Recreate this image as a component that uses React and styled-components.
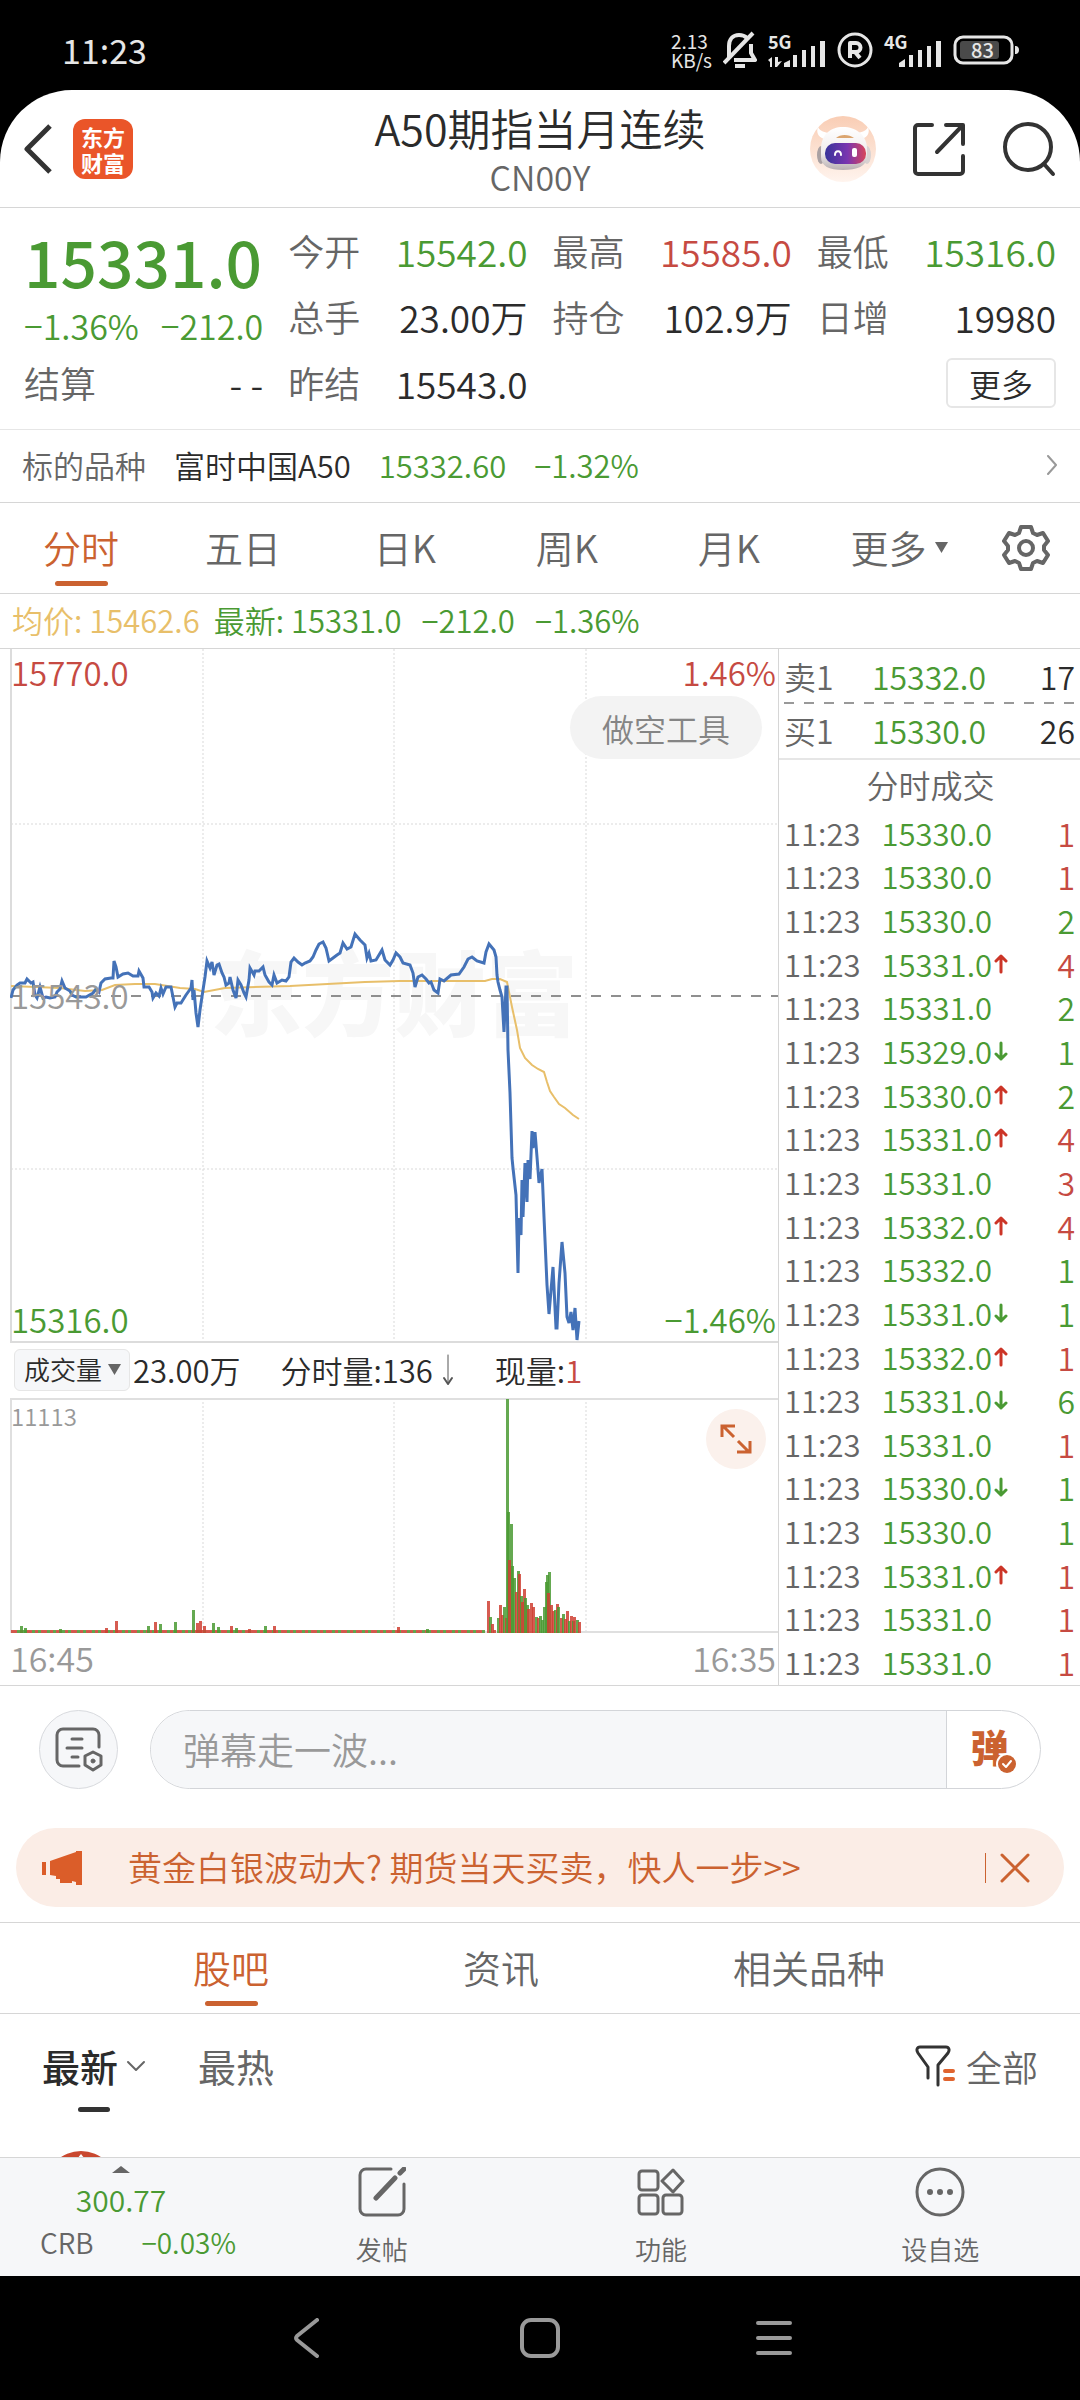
import React from "react";
import styled, { createGlobalStyle, css } from "styled-components";

const c = {
  green: "#4a9a33",
  red: "#c64a42",
  orange: "#cb6230",
  yellow: "#e8bf6a",
  blue: "#4472b8",
  ink: "#2b2b2b",
  sub: "#666666",
  mute: "#999999",
  line: "#d6d6d6",
  soft: "#e6e6e6",
  fill: "#f6f7f9",
};

const GlobalStyle = createGlobalStyle`
  * { box-sizing: border-box; }
  body {
    margin: 0;
    background: #000;
    color: ${c.ink};
    font-family: "Noto Sans CJK SC", "Noto Sans", sans-serif;
    font-weight: 350;
    font-size: 32px;
    line-height: 1.2;
  }
  button, input, select, table { font: inherit; color: inherit; }
  button { background: none; border: 0; padding: 0; margin: 0; cursor: pointer; }
  a { color: inherit; text-decoration: none; }
  svg { display: block; flex: none; }
  h1, h2, p, dl, dt, dd { margin: 0; font: inherit; }
`;

const tone = (p) => c[p.$tone] || c.ink;

const Text = styled.span`
  color: ${tone};
  font-size: ${(p) => p.$size || 31}px;
  white-space: nowrap;
`;

/* ---------- status bar ---------- */

const StatusBar = styled.div`
  display: flex;
  align-items: center;
  justify-content: space-between;
  height: 90px;
  padding: 10px 60px 0 62px;
  color: #e6e6e6;
`;

const Clock = styled.time`
  font-size: 34px;
  font-weight: 400;
`;

const StatusIcons = styled.div`
  display: flex;
  align-items: center;
  gap: 11px;
`;

const Speed = styled.div`
  font-size: 19px;
  font-weight: 400;
  line-height: 19px;
`;

const Signal = styled.div`
  display: flex;
  align-items: flex-end;
  height: 36px;
`;

const Generation = styled.span`
  align-self: flex-start;
  width: 0;
  overflow: visible;
  white-space: nowrap;
  font-size: 18px;
  font-weight: 700;
  line-height: 18px;
`;

const Battery = styled.div`
  display: grid;
  place-items: center;
  > * { grid-area: 1 / 1; }
`;

const Charge = styled.span`
  padding-right: 8px;
  font-size: 20px;
  font-weight: 500;
  line-height: 26px;
`;

/* ---------- header ---------- */

const Sheet = styled.main`
  overflow: hidden;
  background: #fff;
  border-radius: 72px 72px 0 0;
`;

const Header = styled.header`
  display: grid;
  grid-template-columns: 1fr auto 1fr;
  align-items: center;
  height: 118px;
  padding: 0 24px;
  border-bottom: 1px solid ${c.line};
`;

const HeaderSide = styled.div`
  display: flex;
  align-items: center;
  justify-content: ${(p) => (p.$end ? "flex-end" : "flex-start")};
  gap: ${(p) => (p.$end ? 37 : 21)}px;
`;

const Logo = styled.a`
  display: grid;
  place-content: center;
  width: 60px;
  height: 60px;
  border-radius: 12px;
  background: #ea5529;
  color: #fff;
  font-size: 22px;
  font-weight: 700;
  line-height: 26px;
`;

const TitleBlock = styled.div`
  display: flex;
  flex-direction: column;
  align-items: center;
  padding-top: 4px;
`;

const Title = styled.h1`
  font-size: 43px;
  line-height: 52px;
`;

const Code = styled.p`
  color: ${c.sub};
  font-size: 34px;
  line-height: 48px;
`;

/* ---------- quote ---------- */

const Quote = styled.section`
  display: grid;
  grid-template-columns: repeat(4, minmax(0, 1fr));
  column-gap: 25px;
  padding: 10px 24px 13px;
  border-bottom: 1px solid ${c.soft};
`;

const QuoteColumn = styled.dl`
  display: flex;
  flex-direction: column;
`;

const QuoteRow = styled.div`
  display: flex;
  align-items: center;
  justify-content: space-between;
  height: ${(p) => p.$height || 66}px;
  white-space: nowrap;
`;

const Term = styled.dt`
  color: ${c.sub};
  font-size: 36px;
`;

const Value = styled.dd`
  color: ${tone};
  font-size: ${(p) => p.$size || 37}px;
  font-weight: ${(p) => p.$weight || 350};
`;

const MoreButton = styled.button`
  width: 110px;
  height: 50px;
  margin-left: auto;
  border: 2px solid ${c.soft};
  border-radius: 6px;
  font-size: 32px;
  line-height: 42px;
`;

const Underlying = styled.a`
  display: flex;
  align-items: center;
  gap: 28px;
  height: 73px;
  padding: 0 22px 2px;
  border-bottom: 1px solid ${c.line};
  svg { margin-left: auto; }
`;

/* ---------- tabs ---------- */

const TabBar = styled.nav`
  display: flex;
  height: 91px;
  border-bottom: 1px solid ${c.line};
  ${(p) =>
    p.$spread
      ? css`
          > button { flex: 1 1 0; }
        `
      : css`
          gap: 194px;
          padding-left: 193px;
        `}
`;

const Tab = styled.button`
  display: flex;
  flex-direction: column;
  align-items: center;
  gap: 7px;
  padding-top: 17px;
  color: ${(p) => (p.$active ? c.orange : c.sub)};
  font-size: 38px;
  line-height: 54px;
  &::after {
    content: "";
    width: 53px;
    height: 5px;
    border-radius: 3px;
    background: ${(p) => (p.$active ? c.orange : "transparent")};
  }
`;

const TabLabel = styled.span`
  display: flex;
  align-items: center;
  gap: 8px;
  padding-left: ${(p) => (p.$inset ? 16 : 0)}px;
`;

const Settings = styled.button`
  &&& { flex: 0 0 108px; }
  display: grid;
  place-items: center;
`;

/* ---------- charts ---------- */

const Legend = styled.div`
  display: flex;
  align-items: center;
  gap: 20px;
  height: 55px;
  padding: 0 12px 2px;
  border-bottom: 1px solid ${c.line};
`;

const LegendPair = styled.span`
  display: flex;
  gap: 14px;
`;

const Market = styled.section`
  display: grid;
  grid-template-columns: 1fr 302px;
  border-bottom: 1px solid ${c.line};
`;

const Charts = styled.div`
  display: flex;
  flex-direction: column;
  padding-left: 10px;
`;

const Plot = styled.div`
  position: relative;
  height: ${(p) => p.$height}px;
  > svg { position: relative; width: 100%; height: 100%; }
`;

const PlotLabel = styled.span`
  position: absolute;
  ${(p) => (p.$right ? "right: 2px" : "left: 1px")};
  ${(p) => p.$edge || "top"}: ${(p) => p.$offset};
  color: ${tone};
  font-size: ${(p) => p.$size || 33}px;
  line-height: 40px;
`;

const Watermark = styled.span`
  position: absolute;
  inset: 0;
  display: grid;
  place-items: center;
  padding-bottom: 14px;
  color: #f7f7f7;
  font-size: 92px;
  font-weight: 900;
  line-height: 92px;
  white-space: nowrap;
`;

const ShortTool = styled.button`
  position: absolute;
  top: 47px;
  right: 16px;
  width: 192px;
  height: 63px;
  border-radius: 32px;
  background: #f3f3f3;
  color: #858585;
  font-size: 32px;
  line-height: 60px;
`;

const Expand = styled.button`
  position: absolute;
  top: 11px;
  right: 12px;
  display: grid;
  place-items: center;
  width: 60px;
  height: 60px;
  border-radius: 50%;
  background: #fbf1ec;
`;

const VolumeHead = styled.div`
  display: flex;
  align-items: center;
  height: 55px;
  padding: 0 0 2px 4px;
  gap: 40px;
`;

const VolumeGroup = styled.div`
  display: flex;
  align-items: center;
  gap: ${(p) => p.$gap || 0}px;
`;

const Picker = styled.div`
  display: grid;
  align-items: center;
  width: 116px;
  height: 42px;
  border: 1px solid ${c.soft};
  border-radius: 6px;
  background: ${c.fill};
  > * { grid-area: 1 / 1; }
  > svg { justify-self: end; margin-right: 8px; pointer-events: none; }
`;

const Select = styled.select`
  width: 100%;
  height: 40px;
  padding: 0 0 2px 9px;
  border: 0;
  appearance: none;
  background: transparent;
  font-size: 26px;
`;

const Axis = styled.div`
  display: flex;
  justify-content: space-between;
  align-items: center;
  height: 52px;
  padding: 0 2px 2px 0;
`;

/* ---------- order book and trades ---------- */

const Book = styled.aside`
  border-left: 1px solid ${c.line};
`;

const Quotes = styled.table`
  width: 100%;
  border-collapse: collapse;
  border-bottom: 2px solid ${c.soft};
`;

const QuotesLine = styled.tr`
  height: 55px;
  background: ${(p) =>
    p.$dashed
      ? `repeating-linear-gradient(90deg, ${c.mute} 0 10px, transparent 10px 20px) 5px 100% / 100% 2px no-repeat`
      : "none"};
`;

const Trades = styled.table`
  width: 100%;
  height: 873px;
  border-collapse: collapse;
  caption {
    height: 52px;
    padding-left: 2px;
    color: ${c.sub};
    line-height: 48px;
  }
`;

const Cell = styled.td`
  padding: 0 ${(p) => (p.$end ? 5 : 0)}px 2px ${(p) => (p.$start ? 5 : 0)}px;
  color: ${tone};
  font-size: ${(p) => p.$size || 32}px;
  line-height: 36px;
  text-align: ${(p) => (p.$start ? "left" : "right")};
  white-space: nowrap;
  width: ${(p) => p.$width}px;
`;

const Direction = styled.td`
  width: 20px;
  padding: 0 0 2px 2px;
`;

/* ---------- danmaku and banner ---------- */

const Danmaku = styled.form`
  display: flex;
  gap: 32px;
  padding: 24px 39px 39px;
`;

const RoundButton = styled.button`
  display: grid;
  place-items: center;
  width: 79px;
  height: 79px;
  border: 1px solid #d8dade;
  border-radius: 50%;
  background: ${c.fill};
`;

const Field = styled.div`
  display: flex;
  flex: 1;
  height: 79px;
  overflow: hidden;
  border: 1px solid #d3d5d9;
  border-radius: 40px;
`;

const Input = styled.input`
  flex: 1;
  min-width: 0;
  padding: 0 0 0 32px;
  border: 0;
  outline: 0;
  background: ${c.fill};
  font-size: 37px;
  &::placeholder { color: ${c.mute}; opacity: 1; }
`;

const DanmakuToggle = styled.button`
  display: grid;
  place-items: center;
  width: 94px;
  border-left: 1px solid #d3d5d9;
  color: ${c.orange};
  > * { grid-area: 1 / 1; }
  svg { margin: 28px 0 0 26px; }
`;

const DanmakuGlyph = styled.span`
  padding-bottom: 8px;
  padding-right: 8px;
  font-size: 38px;
  font-weight: 900;
  line-height: 40px;
`;

const Banner = styled.div`
  display: flex;
  align-items: center;
  height: 79px;
  margin: 0 16px 15px;
  padding: 0 34px 0 26px;
  border-radius: 40px;
  background: #fbede6;
  color: ${c.orange};
`;

const BannerLink = styled.a`
  flex: 1;
  padding-left: 44px;
  font-size: 34px;
`;

const Close = styled.button`
  padding-left: 14px;
  border-left: 1px solid ${c.orange};
`;

/* ---------- forum ---------- */

const Forum = styled.section`
  border-top: 1px solid ${c.line};
`;

const SortBar = styled.div`
  display: flex;
  align-items: flex-start;
  gap: 52px;
  height: 111px;
  padding: 25px 42px 0;
`;

const Sort = styled.button`
  display: flex;
  flex-direction: column;
  align-items: center;
  gap: 14px;
  color: ${(p) => (p.$active ? c.ink : c.sub)};
  font-size: 38px;
  font-weight: ${(p) => (p.$active ? 500 : 400)};
  line-height: 54px;
  &::after {
    content: "";
    width: 32px;
    height: 5px;
    border-radius: 3px;
    background: ${(p) => (p.$active ? "#333" : "transparent")};
  }
`;

const Filter = styled.button`
  display: flex;
  align-items: center;
  gap: 11px;
  margin-left: auto;
  color: ${c.sub};
  font-size: 36px;
  line-height: 54px;
`;

const Feed = styled.div`
  height: 32px;
  padding: 26px 0 0 45px;
  overflow: hidden;
`;

const Avatar = styled.div`
  display: flex;
  justify-content: center;
  width: 72px;
  height: 72px;
  padding-top: 3px;
  border-radius: 50%;
  background: #c9482f;
`;

/* ---------- bottom bars ---------- */

const ActionBar = styled.nav`
  display: grid;
  grid-template-columns: 242px repeat(3, 1fr);
  height: 119px;
  border-top: 1px solid ${c.line};
  background: ${c.fill};
`;

const Ticker = styled.a`
  display: flex;
  flex-direction: column;
  align-items: center;
  padding-top: 8px;
`;

const TickerRow = styled.span`
  display: flex;
  align-items: center;
  justify-content: ${(p) => (p.$spread ? "space-between" : "center")};
  width: 100%;
  height: ${(p) => (p.$spread ? 38 : 51)}px;
  padding: ${(p) => (p.$spread ? "0 6px 0 40px" : "0")};
`;

const Action = styled.button`
  display: flex;
  flex-direction: column;
  align-items: center;
  gap: 13px;
  padding-top: 9px;
  color: ${c.sub};
  font-size: 26px;
  line-height: 38px;
`;

const SystemNav = styled.nav`
  display: flex;
  justify-content: center;
  height: 124px;
  background: #000;
  button {
    display: grid;
    place-items: center;
    width: 234px;
  }
`;

/* ---------- drawings ---------- */

const Svg = ({ w, h, children, stroke = "none", sw = 3, ...rest }) => (
  <svg
    width={w}
    height={h}
    viewBox={`0 0 ${w} ${h}`}
    fill="none"
    stroke={stroke}
    strokeWidth={sw}
    strokeLinecap="round"
    strokeLinejoin="round"
    aria-hidden="true"
    {...rest}
  >
    {children}
  </svg>
);

const MuteIcon = () => (
  <Svg w={34} h={38} stroke="#e6e6e6" sw={4} strokeLinecap="butt">
    <path d="M6 27V15C6 8 10 4 16 4c4 0 6 1 8 3" />
    <path d="M28 13v9l4 7H11" />
    <path d="M1 32 30 2" />
    <path d="M12 35h10" strokeWidth="4" />
  </Svg>
);

const Bars = ({ data }) => (
  <Svg w={58} h={30}>
    <g fill="#e6e6e6">
      {data && <path d="M0 22l4-3v10H2v-5zM7 19h3v5l4-1-5 6H7zM16 25l6-3v7h-6z" />}
      {!data && <path d="M15 25l6-4v8h-6z" />}
      <rect x="25" y="17" width="4" height="12" />
      <rect x="34" y="12" width="4" height="17" />
      <rect x="43" y="8" width="4" height="21" />
      <rect x="52" y="3" width="5" height="26" />
    </g>
  </Svg>
);

const RoamingIcon = () => (
  <Svg w={36} h={36} stroke="#e6e6e6" sw={3}>
    <circle cx="18" cy="18" r="16" />
    <path d="M13 26V11h6a4 4 0 0 1 0 9h-6M18 20l5 6" strokeWidth="4" strokeLinecap="butt" />
  </Svg>
);

const BatteryIcon = () => (
  <Svg w={67} h={30}>
    <rect x="2" y="2" width="57" height="26" rx="8" stroke="#e6e6e6" strokeWidth="3" />
    <rect x="7" y="6" width="39" height="18" rx="3" fill="#4a4a4a" />
    <path d="M62 11v8c3 0 4-2 4-4s-1-4-4-4z" fill="#e6e6e6" />
  </Svg>
);

const BackIcon = () => (
  <Svg w={28} h={50} stroke="#333" sw={5} strokeLinecap="butt">
    <path d="M26 2 3 25l23 23" />
  </Svg>
);

const RobotIcon = () => (
  <Svg w={66} h={68}>
    <defs>
      <linearGradient id="peach" x1="0" y1="0" x2="0" y2="1">
        <stop offset="0" stopColor="#f9cdb4" />
        <stop offset="1" stopColor="#fff4ee" />
      </linearGradient>
      <linearGradient id="visor" x1="0" y1="0" x2="1" y2="0">
        <stop offset="0" stopColor="#38349a" />
        <stop offset="0.55" stopColor="#7a35b0" />
        <stop offset="1" stopColor="#d8455a" />
      </linearGradient>
      <linearGradient id="shell" x1="0" y1="0" x2="0" y2="1">
        <stop offset="0" stopColor="#ffffff" />
        <stop offset="0.6" stopColor="#f0ecec" />
        <stop offset="1" stopColor="#b9b0b2" />
      </linearGradient>
    </defs>
    <circle cx="33" cy="34" r="33" fill="url(#peach)" />
    <path d="M14 24c-6-2-8-7-6-12 1 3 5 5 10 6zM52 24c6-2 8-7 6-12-1 3-5 5-10 6z" fill="#fff" />
    <ellipse cx="11" cy="40" rx="4" ry="9" fill="#aaa1a3" />
    <ellipse cx="57" cy="40" rx="4" ry="9" fill="#d9d2d2" />
    <path d="M11 34c0-14 9-22 22-22s24 8 24 22v8c0 9-10 13-24 13s-22-4-22-13z" fill="url(#shell)" />
    <path d="M26 23c4-4 13-4 18 0z" fill="#dba56f" />
    <rect x="15" y="28" width="41" height="21" rx="10" fill="url(#visor)" />
    <path d="M25 40c0-5 6-5 6 0" stroke="#fff" strokeWidth="2" />
    <rect x="42" y="33" width="5" height="9" rx="2" fill="#fff" />
  </Svg>
);

const ShareIcon = () => (
  <Svg w={52} h={54} stroke="#333" sw={4}>
    <path d="M19 3H5a3 3 0 0 0-3 3v43a3 3 0 0 0 3 3h42a3 3 0 0 0 3-3V34" />
    <path d="M33 3h17v19M49 4 24 30" />
  </Svg>
);

const SearchIcon = () => (
  <Svg w={54} h={56} stroke="#333" sw={4}>
    <circle cx="26" cy="26" r="23" />
    <path d="m42 43 9 10" />
  </Svg>
);

const Caret = () => (
  <Svg w={13} h={11}>
    <path d="M0 0h13L6.5 11z" fill={c.sub} />
  </Svg>
);

const GearIcon = () => (
  <Svg w={48} h={48} stroke={c.sub} sw={4}>
    <path d="M19 3h10l2 6 4 2 6-2 5 8-4 5v4l4 5-5 8-6-2-4 2-2 6H19l-2-6-4-2-6 2-5-8 4-5v-4l-4-5 5-8 6 2 4-2z" />
    <circle cx="24" cy="24" r="7" />
  </Svg>
);

const ExpandIcon = () => (
  <Svg w={32} h={32} stroke={c.orange} sw={3} strokeLinecap="butt" strokeLinejoin="miter">
    <path d="M2 14V3h13M3 3l11 11M30 18v11H17M29 29 18 18" />
  </Svg>
);

const ArrowIcon = ({ up }) => (
  <Svg w={15} h={20} stroke={up ? "#cc3527" : c.green} sw={3}>
    <path d={up ? "M7 18V2M2 7l5-5 5 5" : "M7 2v16M2 13l5 5 5-5"} />
  </Svg>
);

const LongDown = () => (
  <Svg w={14} h={32} stroke="#555" sw={2}>
    <path d="M7 1v29" strokeWidth="1" />
    <path d="M3 24l4 6 4-6" />
  </Svg>
);

const NoteIcon = () => (
  <Svg w={50} h={46} stroke={c.sub} sw={3}>
    <path d="M45 20V8a6 6 0 0 0-6-6H9a6 6 0 0 0-6 6v25a6 6 0 0 0 6 6h16" />
    <path d="M18 12h10M13 21h15M18 30h6" />
    <path d="m39 25 8 4v9l-8 5-8-5v-9z" />
    <circle cx="39" cy="34" r="2" fill={c.sub} strokeWidth="1" />
  </Svg>
);

const CheckBadge = () => (
  <Svg w={22} h={22}>
    <circle cx="11" cy="11" r="11" fill="#fff" />
    <circle cx="11" cy="11" r="9" fill={c.orange} />
    <path d="m7 11 3 3 5-6" stroke="#fff" strokeWidth="2" />
  </Svg>
);

const HornIcon = () => (
  <Svg w={42} h={36}>
    <path d="M0 12h4v13H0zM8 11l26-9V1h6v34h-6v-3l-4-1v2H18v-4h-4v-3l-6-1z" fill="#db5d29" />
  </Svg>
);

const CloseIcon = () => (
  <Svg w={30} h={30} stroke={c.orange} sw={3}>
    <path d="m2 2 26 26M28 2 2 28" />
  </Svg>
);

const FunnelIcon = () => (
  <Svg w={40} h={42} stroke="#333" sw={3}>
    <path d="M13 33V22L3 8c-2-3-1-6 2-6h26c3 0 4 3 2 6L23 20v20" />
    <path d="M30 26h8M30 34h8" stroke="#e0642f" strokeWidth="4" />
  </Svg>
);

const PostIcon = () => (
  <Svg w={48} h={50} stroke={c.sub} sw={3}>
    <path d="M33 2H8a6 6 0 0 0-6 6v34a6 6 0 0 0 6 6h32a6 6 0 0 0 6-6V17" />
    <path d="M18 31 37 11M42 6l4-4" strokeWidth="5" />
  </Svg>
);

const GridIcon = () => (
  <Svg w={48} h={50} stroke={c.sub} sw={3}>
    <rect x="2" y="4" width="19" height="19" rx="3" />
    <path d="m36 3 10 11-10 11-11-11z" />
    <rect x="2" y="28" width="19" height="19" rx="3" />
    <rect x="26" y="28" width="19" height="19" rx="3" />
  </Svg>
);

const DotsIcon = () => (
  <Svg w={50} h={50} stroke={c.sub} sw={3}>
    <circle cx="25" cy="25" r="23" />
    <g fill={c.sub} stroke="none">
      <circle cx="15" cy="25" r="3" />
      <circle cx="25" cy="25" r="3" />
      <circle cx="35" cy="25" r="3" />
    </g>
  </Svg>
);

/* ---------- data ---------- */

const priceLine =
  "11,998 13,990 17,985 20,983 25,983 27,979 31,983 33,982 35,995 37,998 40,987 43,998 46,997 50,998 55,997 57,992 60,989 62,981 65,988 70,991 72,995 76,997 86,997 93,993 96,989 99,992 101,983 105,979 111,978 113,978 114,961 116,967 118,977 123,974 128,973 133,976 138,976 139,971 143,978 144,987 149,987 152,992 153,998 156,993 159,996 161,988 163,994 166,987 171,987 173,997 175,1007 177,1003 181,1003 186,995 191,988 192,980 193,1000 194,990 196,1013 198,1027 200,1010 203,990 205,977 207,961 210,968 212,962 214,975 217,965 219,964 222,973 224,977 226,985 229,983 230,977 233,990 236,998 238,980 241,985 244,993 246,997 249,980 250,968 254,975 255,971 259,971 263,967 265,975 269,982 272,985 274,975 277,983 282,980 286,981 289,977 291,962 294,958 298,962 302,965 305,963 310,961 313,957 316,950 319,944 323,942 326,948 329,961 333,958 337,955 340,953 343,943 347,949 351,947 355,934 360,940 365,945 367,958 369,953 371,961 376,960 382,950 385,960 390,965 393,960 396,953 400,957 403,963 410,965 413,973 415,987 418,977 422,975 426,979 429,983 431,982 434,990 438,993 440,979 444,981 451,975 459,974 464,967 468,959 472,957 477,961 484,963 486,952 489,944 494,950 496,957 497,975 498,982 500,990 502,997 504,1032 506,987 507,987 508,1050 510,1093 512,1158 513,1168 516,1195 518,1273 519,1218 521,1235 522,1180 523,1217 525,1163 527,1202 528,1160 530,1179 532,1131 533,1148 535,1132 537,1157 539,1183 542,1169 544,1217 547,1285 549,1314 553,1267 556,1328 557,1328 559,1283 562,1242 565,1273 567,1317 569,1323 571,1312 573,1330 575,1308 577,1340 579,1321";

const averageLine =
  "11,986 60,988 85,991 102,990 115,985 135,984 155,984 180,988 195,989 204,992 225,988 290,986 365,982 400,981 485,981 492,979 500,979 507,982 512,1007 517,1030 520,1048 525,1058 532,1065 538,1069 544,1072 547,1082 550,1091 554,1097 559,1104 565,1108 573,1115 579,1119";

const spikes = [
  [21, 7, 0], [25, 5, 0], [60, 4, 0], [106, 5, 1], [116, 12, 1], [148, 7, 0], [155, 11, 1],
  [160, 9, 0], [175, 11, 0], [193, 23, 0], [197, 10, 1], [200, 12, 1], [204, 7, 1], [213, 10, 0],
  [218, 6, 0], [231, 7, 1], [236, 5, 0], [249, 4, 1], [265, 7, 0], [274, 7, 1], [398, 6, 1],
  [427, 4, 0], [488, 32, 1], [490, 16, 0], [492, 9, 1], [494, 3, 1], [498, 15, 0], [500, 28, 1],
  [502, 18, 1], [504, 26, 0], [506, 15, 1], [507, 234, 0], [508, 121, 0], [511, 109, 0], [509, 73, 1],
  [512, 67, 0], [514, 55, 0], [516, 41, 1], [518, 62, 0], [519, 59, 1], [521, 37, 0],
  [522, 31, 1], [524, 44, 1], [525, 35, 0], [527, 28, 0], [528, 24, 1], [531, 30, 1], [533, 26, 1],
  [536, 16, 0], [538, 15, 1], [540, 17, 0], [542, 13, 0], [544, 26, 0], [546, 51, 0], [547, 58, 0],
  [549, 61, 0], [548, 40, 1], [551, 28, 1], [553, 22, 1], [555, 23, 0], [557, 29, 1], [558, 26, 0],
  [561, 15, 1], [563, 19, 0], [565, 14, 1], [567, 22, 1], [569, 12, 0], [571, 17, 1], [573, 12, 0],
  [574, 16, 1], [577, 13, 0], [579, 11, 1],
];

const quietBars = Array.from({ length: 158 }, (_, i) => [12 + i * 3, 3, (i * 7) % 5 < 3 ? 1 : 0]);

const trades = [
  ["15330.0", "", 1, "red"],
  ["15330.0", "", 1, "red"],
  ["15330.0", "", 2, "green"],
  ["15331.0", "up", 4, "red"],
  ["15331.0", "", 2, "green"],
  ["15329.0", "down", 1, "green"],
  ["15330.0", "up", 2, "green"],
  ["15331.0", "up", 4, "red"],
  ["15331.0", "", 3, "red"],
  ["15332.0", "up", 4, "red"],
  ["15332.0", "", 1, "green"],
  ["15331.0", "down", 1, "green"],
  ["15332.0", "up", 1, "red"],
  ["15331.0", "down", 6, "green"],
  ["15331.0", "", 1, "red"],
  ["15330.0", "down", 1, "green"],
  ["15330.0", "", 1, "green"],
  ["15331.0", "up", 1, "red"],
  ["15331.0", "", 1, "red"],
  ["15331.0", "", 1, "red"],
];

const gridX = [203, 394, 586];

const Dotted = (props) => (
  <line stroke="#d9d9d9" strokeWidth="1" strokeDasharray="2 2" {...props} />
);

const PriceChart = () => (
  <Plot $height={694}>
    <Watermark aria-hidden="true">东方财富</Watermark>
    <svg viewBox="10 649 768 694" preserveAspectRatio="none" fill="none">
      {gridX.map((x) => (
        <Dotted key={x} x1={x} x2={x} y1="649" y2="1343" />
      ))}
      <Dotted x1="11" x2="778" y1="824" y2="824" />
      <Dotted x1="11" x2="778" y1="1169" y2="1169" />
      <line x1="11" x2="778" y1="996" y2="996" stroke="#8f8f8f" strokeWidth="2" strokeDasharray="10 10" />
      <path d="M11 649V1342H778" stroke="#dcdcdc" strokeWidth="2" />
      <polyline points={averageLine} stroke={c.yellow} strokeWidth="2" />
      <polyline points={priceLine} stroke={c.blue} strokeWidth="3" />
    </svg>
    <PlotLabel $tone="red" $offset="3px">15770.0</PlotLabel>
    <PlotLabel $tone="red" $offset="3px" $right>1.46%</PlotLabel>
    <PlotLabel $tone="mute" $offset="calc(50% - 21px)">15543.0</PlotLabel>
    <PlotLabel $tone="green" $edge="bottom" $offset="4px">15316.0</PlotLabel>
    <PlotLabel $tone="green" $edge="bottom" $offset="4px" $right>−1.46%</PlotLabel>
    <ShortTool type="button">做空工具</ShortTool>
  </Plot>
);

const VolumeChart = () => (
  <Plot $height={235}>
    <svg viewBox="10 0 768 235" preserveAspectRatio="none" fill="none">
      {gridX.map((x) => (
        <Dotted key={x} x1={x} x2={x} y1="0" y2="235" />
      ))}
      <path d="M778 1H11V234H778" stroke="#dfdfdf" strokeWidth="2" />
      {[...quietBars, ...spikes].map(([x, h, up], i) => (
        <rect key={i} x={x - 1} y={235 - h} width="3" height={h} fill={up ? "#cf3f33" : c.green} fillOpacity="0.85" />
      ))}
    </svg>
    <PlotLabel $tone="mute" $size={24} $offset="-2px">11113</PlotLabel>
    <Expand type="button" aria-label="放大">
      <ExpandIcon />
    </Expand>
  </Plot>
);

const Pair = ({ label, children, tone: t }) => (
  <QuoteRow>
    <Term>{label}</Term>
    <Value $tone={t}>{children}</Value>
  </QuoteRow>
);

export default function App() {
  return (
    <>
      <GlobalStyle />
      <StatusBar>
        <Clock>11:23</Clock>
        <StatusIcons>
          <Speed>
            2.13
            <br />
            KB/s
          </Speed>
          <MuteIcon />
          <Signal>
            <Generation>5G</Generation>
            <Bars data />
          </Signal>
          <RoamingIcon />
          <Signal>
            <Generation>4G</Generation>
            <Bars />
          </Signal>
          <Battery>
            <BatteryIcon />
            <Charge>83</Charge>
          </Battery>
        </StatusIcons>
      </StatusBar>

      <Sheet>
        <Header>
          <HeaderSide>
            <button type="button" aria-label="返回">
              <BackIcon />
            </button>
            <Logo href="#home">
              <span>东方</span>
              <span>财富</span>
            </Logo>
          </HeaderSide>
          <TitleBlock>
            <Title>A50期指当月连续</Title>
            <Code>CN00Y</Code>
          </TitleBlock>
          <HeaderSide $end>
            <button type="button" aria-label="助手">
              <RobotIcon />
            </button>
            <button type="button" aria-label="分享">
              <ShareIcon />
            </button>
            <button type="button" aria-label="搜索">
              <SearchIcon />
            </button>
          </HeaderSide>
        </Header>

        <Quote>
          <QuoteColumn>
            <QuoteRow $height={84}>
              <Value $tone="green" $size={64} $weight={500}>15331.0</Value>
            </QuoteRow>
            <QuoteRow $height={48}>
              <Value $tone="green" $size={34}>−1.36%</Value>
              <Value $tone="green" $size={34}>−212.0</Value>
            </QuoteRow>
            <Pair label="结算">- -</Pair>
          </QuoteColumn>
          <QuoteColumn>
            <Pair label="今开" tone="green">15542.0</Pair>
            <Pair label="总手">23.00万</Pair>
            <Pair label="昨结">15543.0</Pair>
          </QuoteColumn>
          <QuoteColumn>
            <Pair label="最高" tone="red">15585.0</Pair>
            <Pair label="持仓">102.9万</Pair>
          </QuoteColumn>
          <QuoteColumn>
            <Pair label="最低" tone="green">15316.0</Pair>
            <Pair label="日增">19980</Pair>
            <QuoteRow>
              <MoreButton type="button">更多</MoreButton>
            </QuoteRow>
          </QuoteColumn>
        </Quote>

        <Underlying href="#underlying">
          <Text $tone="sub">标的品种</Text>
          <Text>富时中国A50</Text>
          <Text $tone="green">15332.60</Text>
          <Text $tone="green">−1.32%</Text>
          <Svg w={12} h={20} stroke={c.mute} sw={2}>
            <path d="m2 1 8 9-8 9" />
          </Svg>
        </Underlying>

        <TabBar $spread>
          <Tab type="button" $active>分时</Tab>
          <Tab type="button">五日</Tab>
          <Tab type="button">日K</Tab>
          <Tab type="button">周K</Tab>
          <Tab type="button">月K</Tab>
          <Tab type="button">
            <TabLabel $inset>
              更多
              <Caret />
            </TabLabel>
          </Tab>
          <Settings type="button" aria-label="设置">
            <GearIcon />
          </Settings>
        </TabBar>

        <Legend>
          <LegendPair>
            <Text $tone="yellow">均价: 15462.6</Text>
            <Text $tone="green">最新: 15331.0</Text>
          </LegendPair>
          <Text $tone="green">−212.0</Text>
          <Text $tone="green">−1.36%</Text>
        </Legend>

        <Market>
          <Charts>
            <PriceChart />
            <VolumeHead>
              <VolumeGroup $gap={3}>
                <Picker>
                  <Select aria-label="指标" defaultValue="vol">
                    <option value="vol">成交量</option>
                  </Select>
                  <Caret />
                </Picker>
                <Text>23.00万</Text>
              </VolumeGroup>
              <VolumeGroup $gap={8}>
                <Text>分时量:136</Text>
                <LongDown />
              </VolumeGroup>
              <VolumeGroup>
                <Text>现量:</Text>
                <Text $tone="red">1</Text>
              </VolumeGroup>
            </VolumeHead>
            <VolumeChart />
            <Axis>
              <Text $tone="mute" $size={34}>16:45</Text>
              <Text $tone="mute" $size={34}>16:35</Text>
            </Axis>
          </Charts>

          <Book>
            <Quotes>
              <tbody>
                <QuotesLine $dashed>
                  <Cell $start $tone="sub" $width={78}>卖1</Cell>
                  <Cell $tone="green" $width={129}>15332.0</Cell>
                  <Cell $end>17</Cell>
                </QuotesLine>
                <QuotesLine>
                  <Cell $start $tone="sub" $width={78}>买1</Cell>
                  <Cell $tone="green" $width={129}>15330.0</Cell>
                  <Cell $end>26</Cell>
                </QuotesLine>
              </tbody>
            </Quotes>
            <Trades>
              <caption>分时成交</caption>
              <tbody>
                {trades.map(([price, move, qty, side], i) => (
                  <tr key={i}>
                    <Cell $start $tone="sub" $size={31} $width={94}>11:23</Cell>
                    <Cell $tone="green" $size={31} $width={119}>{price}</Cell>
                    <Direction>{move && <ArrowIcon up={move === "up"} />}</Direction>
                    <Cell $end $tone={side}>{qty}</Cell>
                  </tr>
                ))}
              </tbody>
            </Trades>
          </Book>
        </Market>

        <Danmaku onSubmit={(e) => e.preventDefault()}>
          <RoundButton type="button" aria-label="弹幕设置">
            <NoteIcon />
          </RoundButton>
          <Field>
            <Input aria-label="弹幕" placeholder="弹幕走一波..." />
            <DanmakuToggle type="button">
              <DanmakuGlyph>弹</DanmakuGlyph>
              <CheckBadge />
            </DanmakuToggle>
          </Field>
        </Danmaku>

        <Banner>
          <HornIcon />
          <BannerLink href="#promo">{"黄金白银波动大? 期货当天买卖，快人一步>>"}</BannerLink>
          <Close type="button" aria-label="关闭">
            <CloseIcon />
          </Close>
        </Banner>

        <Forum>
          <TabBar>
            <Tab type="button" $active>股吧</Tab>
            <Tab type="button">资讯</Tab>
            <Tab type="button">相关品种</Tab>
          </TabBar>
          <SortBar>
            <Sort type="button" $active>
              <TabLabel>
                最新
                <Svg w={20} h={12} stroke={c.sub} sw={2}>
                  <path d="m2 2 8 8 8-8" />
                </Svg>
              </TabLabel>
            </Sort>
            <Sort type="button">最热</Sort>
            <Filter type="button">
              <FunnelIcon />
              全部
            </Filter>
          </SortBar>
          <Feed>
            <Avatar>
              <Svg w={10} h={10}>
                <path d="M5 0 9 5H1z" fill="#fff" />
              </Svg>
            </Avatar>
          </Feed>
        </Forum>

        <ActionBar>
          <Ticker href="#crb">
            <Svg w={18} h={7}>
              <path d="M9 0 18 7H0z" fill={c.sub} />
            </Svg>
            <TickerRow>
              <Text $tone="green" $size={30}>300.77</Text>
            </TickerRow>
            <TickerRow $spread>
              <Text $tone="sub" $size={28}>CRB</Text>
              <Text $tone="green" $size={28}>−0.03%</Text>
            </TickerRow>
          </Ticker>
          <Action type="button">
            <PostIcon />
            发帖
          </Action>
          <Action type="button">
            <GridIcon />
            功能
          </Action>
          <Action type="button">
            <DotsIcon />
            设自选
          </Action>
        </ActionBar>
      </Sheet>

      <SystemNav>
        <button type="button" aria-label="后退">
          <Svg w={26} h={40} stroke="#999" sw={4}>
            <path d="M24 2 4 18a3 3 0 0 0 0 4l20 16" />
          </Svg>
        </button>
        <button type="button" aria-label="主页">
          <Svg w={40} h={40} stroke="#999" sw={4}>
            <rect x="2" y="2" width="36" height="36" rx="9" />
          </Svg>
        </button>
        <button type="button" aria-label="最近">
          <Svg w={38} h={36} stroke="#999" sw={4}>
            <path d="M3 3h32M3 18h32M3 33h32" />
          </Svg>
        </button>
      </SystemNav>
    </>
  );
}
